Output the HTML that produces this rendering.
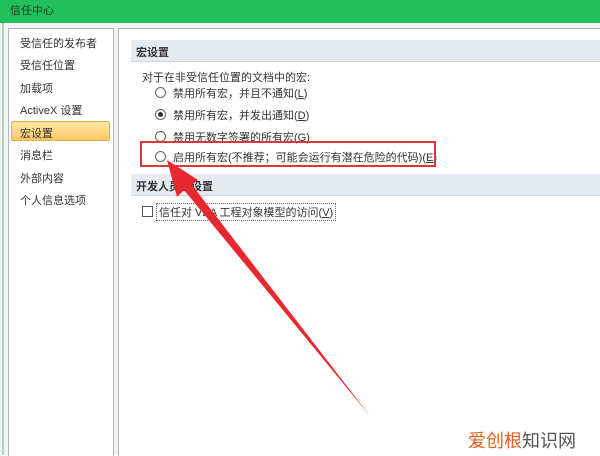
<!DOCTYPE html>
<html><head><meta charset="utf-8"><style>
body{margin:0;width:600px;height:455px;position:relative;background:#fff;font-family:"Liberation Sans","Noto Sans CJK SC",sans-serif;font-size:11px;color:#333;overflow:hidden}
.a{position:absolute}
.title{left:0;top:0;width:600px;height:23px;background:#22c05b;color:#1a3a22;font-size:11px;line-height:23px;padding-left:10px;box-sizing:border-box}
.nav div{position:absolute;left:20px;white-space:nowrap}
.radio{position:absolute;width:9px;height:9px;border:1px solid #666;border-radius:50%;background:#fff}
.opt{position:absolute;left:173px;white-space:nowrap}
</style></head><body>
<div class="a title">信任中心</div>
<div class="a" style="left:0;top:23px;width:600px;height:432px;background:#f3f3f3"></div>
<div class="a" style="left:2px;top:23px;width:2px;height:432px;background:#a8d8b8"></div>
<div class="a" style="left:8px;top:28px;width:104px;height:427px;background:#fff;border:1px solid #b0b6c0;border-bottom:none"></div>
<div class="a" style="left:118px;top:28px;width:482px;height:427px;background:#fff;border-left:1px solid #b0b6c0;border-top:1px solid #b0b6c0"></div>
<div class="a nav">
<div style="top:35px">受信任的发布者</div>
<div style="top:57px">受信任位置</div>
<div style="top:80px">加载项</div>
<div style="top:102px">ActiveX 设置</div>
<div style="left:11px;top:121px;width:99px;height:20px;background:linear-gradient(#ffe8a8,#fcc764);border:1px solid #e0b050;border-radius:2px;box-sizing:border-box"></div>
<div style="top:125px">宏设置</div>
<div style="top:147px">消息栏</div>
<div style="top:170px">外部内容</div>
<div style="top:192px">个人信息选项</div>
</div>
<div class="a" style="left:131px;top:40px;width:469px;height:21px;background:#e5eaf0;border-bottom:1px solid #d0d6de"></div>
<div class="a" style="left:136px;top:44px;font-weight:bold">宏设置</div>
<div class="a" style="left:142px;top:69px">对于在非受信任位置的文档中的宏:</div>
<div class="radio" style="left:155px;top:87px"></div><div class="opt" style="top:85px">禁用所有宏，并且不通知(<u>L</u>)</div>
<div class="radio" style="left:155px;top:109px"></div><div class="a" style="left:158px;top:112px;width:5px;height:5px;border-radius:50%;background:#333"></div><div class="opt" style="top:107px">禁用所有宏，并发出通知(<u>D</u>)</div>
<div class="radio" style="left:155px;top:131px"></div><div class="opt" style="top:129px">禁用无数字签署的所有宏(<u>G</u>)</div>
<div class="radio" style="left:155px;top:151px"></div><div class="opt" style="top:149px">启用所有宏(不推荐；可能会运行有潜在危险的代码)(<u>E</u>)</div>
<div class="a" style="left:140px;top:141px;width:296px;height:26px;border:2px solid #d9363e;box-sizing:border-box"></div>
<div class="a" style="left:131px;top:174px;width:469px;height:21px;background:#e5eaf0;border-bottom:1px solid #d0d6de"></div>
<div class="a" style="left:136px;top:178px;font-weight:bold">开发人员宏设置</div>
<div class="a" style="left:142px;top:206px;width:9px;height:9px;border:1px solid #555;background:#fff"></div>
<div class="a" style="left:156px;top:203px;border:1px dotted #666;padding:0 2px;white-space:nowrap">信任对 VBA 工程对象模型的访问(<u>V</u>)</div>
<svg class="a" style="left:0;top:0" width="600" height="455"><polygon points="167,160 198,180 192,185 370,416 184,190 177,197" fill="#e8282e"/></svg>
<div class="a" style="left:468px;top:427px;font-size:18px;white-space:nowrap"><span style="color:#e0601e">爱创根</span><span style="color:#555">知识网</span></div>
</body></html>
